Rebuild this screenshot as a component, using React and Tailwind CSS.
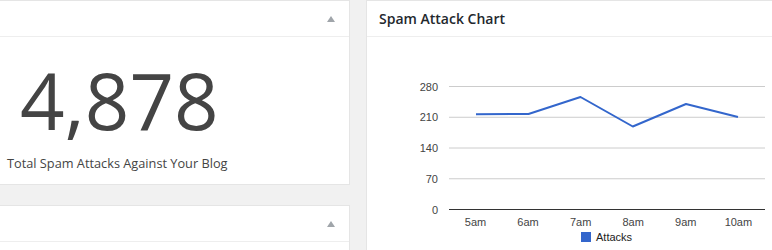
export default function App() {
  const pts = [
    [476, 114.3],
    [528.5, 114],
    [580.5, 97],
    [632.8, 126.5],
    [686, 104],
    [738, 117],
  ];
  const grid = [
    { y: 86, label: "280" },
    { y: 116.75, label: "210" },
    { y: 147.5, label: "140" },
    { y: 178.25, label: "70" },
  ];
  const xs = [
    [475.5, "5am"],
    [528, "6am"],
    [580.6, "7am"],
    [633.2, "8am"],
    [685.8, "9am"],
    [738.4, "10am"],
  ];
  const Tri = () => (
    <svg width="8" height="6" viewBox="0 0 8 6" className="block">
      <polygon points="4,0 8,6 0,6" fill="#a0a5aa" />
    </svg>
  );
  return (
    <div
      className="w-[772px] h-[250px] overflow-hidden bg-[#f1f1f1] flex gap-[16px]"
      style={{ fontFamily: '"Open Sans", sans-serif' }}
    >
      <div className="w-[350px] shrink-0 flex flex-col gap-[20px]">
        <div className="bg-white border-t border-r border-b border-[#e5e5e5]">
          <div className="h-[36px] border-b border-[#eeeeee] flex items-center justify-end pr-[14px]">
            <div className="mt-[1px]">
              <Tri />
            </div>
          </div>
          <div className="pl-[7px] pt-[24px] pb-[11px] text-[#444444]">
            <div className="ml-[13px] h-[78px] text-[78px] leading-[78px]">4,878</div>
            <div className="mt-[14px] text-[12.75px] leading-[20px]">
              Total Spam Attacks Against Your Blog
            </div>
          </div>
        </div>
        <div className="bg-white border-t border-r border-[#e5e5e5] flex-1">
          <div className="h-[36px] border-b border-[#eeeeee] flex items-center justify-end pr-[14px]">
            <div className="mt-[1px]">
              <Tri />
            </div>
          </div>
        </div>
      </div>
      <div className="w-[430px] shrink-0 bg-white border-t border-l border-[#e5e5e5] flex flex-col">
        <div className="h-[36px] border-b border-[#eeeeee] flex items-center pl-[12px]">
          <span className="text-[14px] font-semibold text-[#23282d]">Spam Attack Chart</span>
        </div>
        <div className="flex-1">
          <svg
            width="405"
            height="213"
            viewBox="367 37 405 213"
            className="block"
            style={{ fontFamily: '"Liberation Sans", Arial, sans-serif' }}
          >
            {grid.map((g) => (
              <g key={g.label}>
                <line x1="449" x2="765" y1={g.y + 0.5} y2={g.y + 0.5} stroke="#cccccc" strokeWidth="1" />
                <text x="438" y={g.y + 4.5} textAnchor="end" fontSize="11" fill="#444444">
                  {g.label}
                </text>
              </g>
            ))}
            <text x="438" y="213.5" textAnchor="end" fontSize="11" fill="#444444">
              0
            </text>
            <polyline
              points={pts.map((p) => p.join(",")).join(" ")}
              fill="none"
              stroke="#3366cc"
              strokeWidth="2"
              strokeLinejoin="round"
            />
            <line x1="449" x2="765" y1="209.5" y2="209.5" stroke="#333333" strokeWidth="1" />
            {xs.map(([x, l]) => (
              <text key={l} x={x} y="225.5" textAnchor="middle" fontSize="11" fill="#444444">
                {l}
              </text>
            ))}
            <rect x="581" y="232" width="10" height="10" fill="#3366cc" />
            <text x="596" y="241" fontSize="11" fill="#222222">
              Attacks
            </text>
          </svg>
        </div>
      </div>
    </div>
  );
}
